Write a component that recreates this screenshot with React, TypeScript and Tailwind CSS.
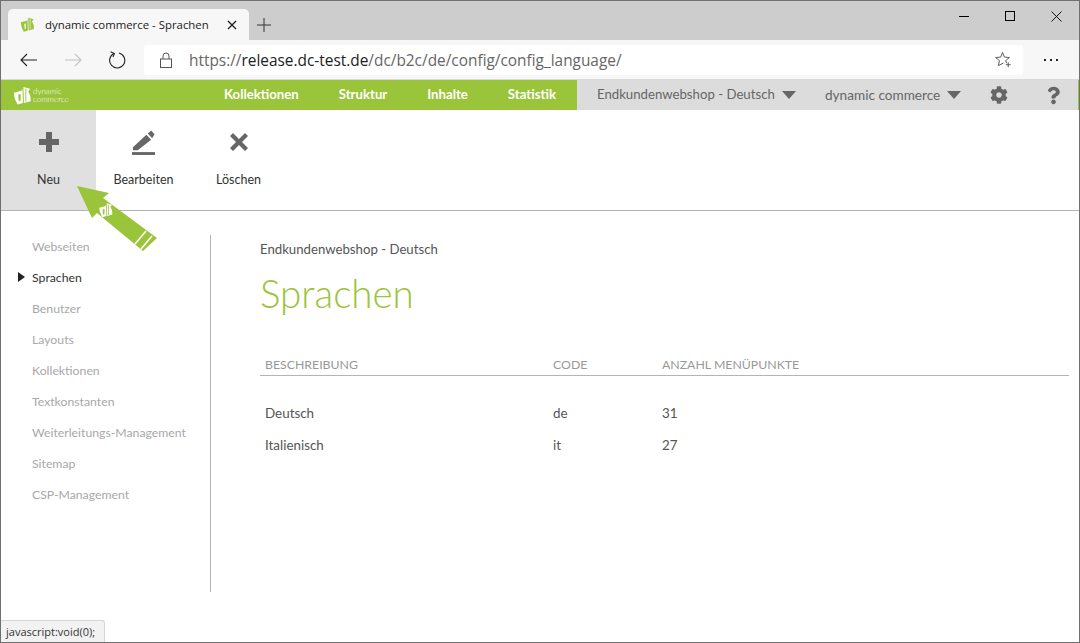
import React from "react";
import { FaCog, FaQuestion } from "react-icons/fa";

const sideItems = [
  "Webseiten",
  "Sprachen",
  "Benutzer",
  "Layouts",
  "Kollektionen",
  "Textkonstanten",
  "Weiterleitungs-Management",
  "Sitemap",
  "CSP-Management",
];

const rows = [
  { name: "Deutsch", code: "de", count: 31 },
  { name: "Italienisch", code: "it", count: 27 },
];

// dc logo mark, used in the tab, the nav bar and on the arrow
const LogoMark = ({ fill, slit, className }: { fill: string; slit: string; className?: string }) => (
  <svg viewBox="0 0 20 20" className={className}>
    <path fill={fill} d="M1 7 L9 5 L10 3 L10.5 18 L5 19.5 Q1 13 1 7 Z" />
    <path fill={fill} d="M11 1 L18 3 L16 6 Q19 10 18.5 16 L11.5 18 Z" />
    <path fill={slit} d="M5.5 9 L8 8.5 L8 15.5 L6 16 Z" />
    <path fill={slit} d="M13 2.5 L14 3 L14 16.5 L13 16.5 Z" />
  </svg>
);

const ToolButton = ({
  label,
  active,
  children,
}: {
  label: string;
  active?: boolean;
  children: React.ReactNode;
}) => (
  <div className={`w-[95px] h-full flex flex-col items-center ${active ? "bg-[#e0e0e0]" : ""}`}>
    <div className="h-[24px] w-[24px] mt-[20px] flex items-center justify-center">{children}</div>
    <div className="mt-[16px] text-[12.5px] leading-[20px] text-[#333]">{label}</div>
  </div>
);

export default function App() {
  return (
    <div className="relative w-[1080px] h-[643px] overflow-hidden bg-white border border-[#707070] font-['Lato',sans-serif] flex flex-col">
      {/* tab strip */}
      <div className="h-[39px] bg-[#cdcdcd] flex items-end pl-[7px] shrink-0">
        <div className="w-[241px] h-[31px] bg-[#f7f7f7] rounded-t-[5px] flex items-center pl-[12px] font-['Open_Sans',sans-serif]">
          <LogoMark fill="#9ac43a" slit="#e4efc4" className="w-[15px] h-[15px]" />
          <span className="ml-[10px] text-[11.4px] text-[#222] whitespace-nowrap">dynamic commerce - Sprachen</span>
          <svg viewBox="0 0 10 10" className="w-[10px] h-[10px] ml-[18px]">
            <path d="M1 1 L9 9 M9 1 L1 9" stroke="#222" strokeWidth="1.4" />
          </svg>
        </div>
        <svg viewBox="0 0 14 14" className="w-[14px] h-[14px] ml-[8px] mb-[8px]">
          <path d="M7 0 V14 M0 7 H14" stroke="#333" strokeWidth="1" />
        </svg>
        <div className="ml-auto h-full flex items-center pb-[9px]">
          <div className="w-[46px] flex justify-center">
            <div className="w-[10px] h-[1px] bg-black" />
          </div>
          <div className="w-[46px] flex justify-center">
            <div className="w-[10px] h-[10px] border border-black" />
          </div>
          <div className="w-[46px] flex justify-center">
            <svg viewBox="0 0 11 11" className="w-[11px] h-[11px]">
              <path d="M0.5 0.5 L10.5 10.5 M10.5 0.5 L0.5 10.5" stroke="#000" strokeWidth="0.9" />
            </svg>
          </div>
        </div>
      </div>

      {/* address bar */}
      <div className="h-[40px] bg-[#f7f7f7] flex items-center shrink-0 border-b border-[#d9d9d9]">
        <svg viewBox="0 0 18 14" className="w-[18px] h-[14px] ml-[19px]">
          <path d="M17 7 H1 M7 1 L1 7 L7 13" fill="none" stroke="#222" strokeWidth="1.1" />
        </svg>
        <svg viewBox="0 0 18 14" className="w-[18px] h-[14px] ml-[26px]">
          <path d="M1 7 H17 M11 1 L17 7 L11 13" fill="none" stroke="#c4c4c4" strokeWidth="1.1" />
        </svg>
        <svg viewBox="0 0 18 18" className="w-[18px] h-[18px] ml-[26px]">
          <path d="M6 2.5 A7.6 7.6 0 1 0 11 2" fill="none" stroke="#222" strokeWidth="1.1" />
          <path d="M2.6 0.8 L6.4 2.6 L5 6" fill="none" stroke="#222" strokeWidth="1.1" />
        </svg>
        <div className="ml-[18px] w-[879px] h-[30px] bg-white rounded-[3px] flex items-center font-['Open_Sans',sans-serif]">
          <svg viewBox="0 0 12 16" className="w-[12px] h-[16px] ml-[16px]">
            <path d="M3 7 V4 A3 3 0 0 1 9 4 V7" fill="none" stroke="#555" strokeWidth="1" />
            <rect x="0.5" y="7" width="11" height="8.5" fill="none" stroke="#555" strokeWidth="1" />
          </svg>
          <span className="ml-[17px] pt-[2px] text-[15.4px] text-[#666] whitespace-nowrap">
            https://<span className="text-[#222]">release.dc-test.de</span>/dc/b2c/de/config/config_language/
          </span>
          <svg viewBox="0 0 18 18" className="w-[17px] h-[17px] ml-auto mr-[11px]">
            <path
              d="M8 1.5 L10 6.5 L15.3 6.9 L11.2 10.3 L12.4 13 M8 1.5 L6 6.5 L0.7 6.9 L4.8 10.3 L3.5 15.5 L9 12.7"
              fill="none"
              stroke="#555"
              strokeWidth="1"
            />
            <path d="M14 12 V17 M11.5 14.5 H16.5" stroke="#555" strokeWidth="1" />
          </svg>
        </div>
        <div className="ml-[21px] flex gap-[4px]">
          <span className="w-[2px] h-[2px] bg-[#222]" />
          <span className="w-[2px] h-[2px] bg-[#222]" />
          <span className="w-[2px] h-[2px] bg-[#222]" />
        </div>
      </div>

      {/* main nav */}
      <div className="h-[30px] bg-[#9ac43a] flex shrink-0 text-[13.2px]">
        <div className="w-[223px] flex items-center pl-[12px]">
          <LogoMark fill="#ffffff" slit="#9ac43a" className="w-[19px] h-[19px]" />
          <div className="ml-[1px] text-[8px] leading-[8px] text-white font-light">
            <div>dynamic</div>
            <div>commerce</div>
          </div>
        </div>
        <div className="flex items-center gap-[40px] font-bold text-[13.2px] text-white w-[353px]">
          <span>Kollektionen</span>
          <span>Struktur</span>
          <span>Inhalte</span>
          <span>Statistik</span>
        </div>
        <div className="w-[501px] bg-[#dcdcdc] flex items-center text-[#666] relative">
          <span className="ml-[20px] w-[178px] whitespace-nowrap">Endkundenwebshop - Deutsch</span>
          <span className="ml-[7px] w-0 h-0 border-x-[7px] border-x-transparent border-t-[8px] border-t-[#666]" />
          <span className="ml-[29px] w-[115px] text-[13.6px] whitespace-nowrap">dynamic commerce</span>
          <span className="ml-[7px] w-0 h-0 border-x-[7px] border-x-transparent border-t-[8px] border-t-[#666]" />
          <FaCog className="ml-[29px] w-[18px] h-[18px] text-[#666]" />
          <FaQuestion className="ml-[39px] w-[13px] h-[19px] text-[#666]" />
        </div>
      </div>

      {/* action toolbar */}
      <div className="h-[101px] flex shrink-0 border-b border-[#b4b4b4]">
        <ToolButton label="Neu" active>
          <svg viewBox="0 0 22 22" className="w-[22px] h-[22px]">
            <path d="M8 1 H14 V8 H21 V14 H14 V21 H8 V14 H1 V8 H8 Z" fill="#666" />
          </svg>
        </ToolButton>
        <ToolButton label="Bearbeiten">
          <svg viewBox="0 0 24 26" className="w-[23px] h-[25px] mt-[1px]">
            <path d="M1 18 L15 5 L20 10 L6 21 L1 21 Z" fill="#666" />
            <path d="M16.5 3.5 L20 0.5 L23.5 4.5 L21 8.5 Z" fill="#666" />
            <rect x="0" y="23" width="24" height="3" fill="#666" />
          </svg>
        </ToolButton>
        <ToolButton label="Löschen">
          <svg viewBox="0 0 20 20" className="w-[20px] h-[20px]">
            <path d="M4 1 L10 7 L16 1 L19 4 L13 10 L19 16 L16 19 L10 13 L4 19 L1 16 L7 10 L1 4 Z" fill="#666" />
          </svg>
        </ToolButton>
      </div>

      {/* page body */}
      <div className="flex-1 flex min-h-0">
        <div className="w-[210px] h-[357px] mt-[24px] border-r border-[#b4b4b4] shrink-0">
          <ul className="text-[12.25px] leading-[31px] text-[#a8a8a8] -mt-[4px] pl-[31px]">
            {sideItems.map((item) => (
              <li key={item} className={`relative whitespace-nowrap ${item === "Sprachen" ? "text-[#333]" : ""}`}>
                {item === "Sprachen" && (
                  <span className="absolute -left-[14px] top-[10px] w-0 h-0 border-y-[5.5px] border-y-transparent border-l-[7px] border-l-[#222]" />
                )}
                {item}
              </li>
            ))}
          </ul>
        </div>

        <div className="flex-1 pl-[49px] pr-[10px]">
          <div className="mt-[28px] text-[13.2px] leading-[20px] text-[#555]">Endkundenwebshop - Deutsch</div>
          <h1 className="mt-[10px] text-[38.5px] leading-[48px] font-light text-[#9ac43a]">Sprachen</h1>
          <table className="mt-[35px] w-full text-[13.4px] text-left">
            <thead>
              <tr className="border-b border-[#b4b4b4] text-[#999] text-[12.3px]">
                <th className="w-[288px] pl-[5px] pt-[3px] h-[23px] font-normal">BESCHREIBUNG</th>
                <th className="w-[109px] pl-[5px] pt-[3px] font-normal">CODE</th>
                <th className="pl-[5px] pt-[3px] font-normal">ANZAHL MENÜPUNKTE</th>
              </tr>
            </thead>
            <tbody className="text-[#555] before:content-[''] before:block before:h-[22px]">
              {rows.map((row) => (
                <tr key={row.code} className="h-[32px]">
                  <td className="pl-[5px]">{row.name}</td>
                  <td className="pl-[5px]">{row.code}</td>
                  <td className="pl-[5px]">{row.count}</td>
                </tr>
              ))}
            </tbody>
          </table>
        </div>
      </div>

      {/* callout arrow over the toolbar */}
      <svg viewBox="0 0 100 80" className="absolute left-[69px] top-[179px] w-[100px] h-[80px]">
        <path fill="#9ac43a" d="M7 6 L39 13 L33 18 L87 58 L73 71 L27 33 L22 38 Z" />
        <path d="M76 51 L65 64" stroke="#ffffff" strokeWidth="1.6" />
        <path d="M82 56 L71 69" stroke="#ffffff" strokeWidth="1.6" />
        <g transform="translate(36 30) scale(0.75) translate(-10 -10)">
          <path fill="#ffffff" d="M1 7 L9 5 L10 3 L10.5 18 L5 19.5 Q1 13 1 7 Z" />
          <path fill="#ffffff" d="M11 1 L18 3 L16 6 Q19 10 18.5 16 L11.5 18 Z" />
          <path fill="#9ac43a" d="M5.5 9 L8 8.5 L8 15.5 L6 16 Z" />
          <path fill="#9ac43a" d="M13 2.5 L14 3 L14 16.5 L13 16.5 Z" />
        </g>
      </svg>

      {/* status bubble */}
      <div className="absolute left-0 bottom-0 h-[22px] w-[104px] bg-[#f2f2f2] border-t border-r border-[#d6d6d6] rounded-tr-[3px] pl-[5px] text-[11px] leading-[21px] text-[#333] font-['Open_Sans',sans-serif] whitespace-nowrap">
        javascript:void(0);
      </div>
    </div>
  );
}
